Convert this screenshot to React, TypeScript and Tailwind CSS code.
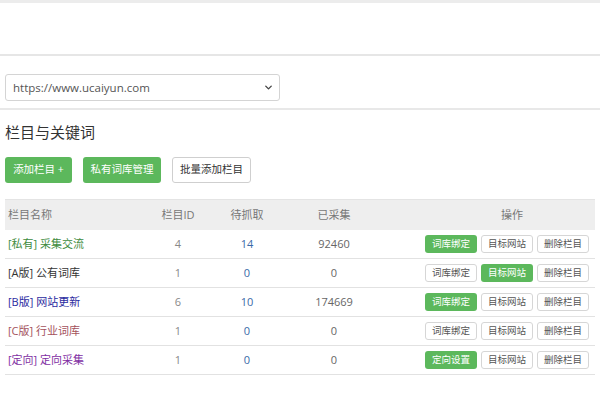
import React from 'react';
import { ChevronDown } from 'lucide-react';

type Row = {
    tag: string;
    name: string;
    color: string;
    id: number;
    pending: number;
    collected: number;
    first: string;
    active: 'first' | 'second' | 'none';
};

const rows: Row[] = [
    { tag: '[私有]', name: '采集交流', color: 'text-[#3d8b3d]', id: 4, pending: 14, collected: 92460, first: '词库绑定', active: 'first' },
    { tag: '[A版]', name: '公有词库', color: 'text-[#333333]', id: 1, pending: 0, collected: 0, first: '词库绑定', active: 'second' },
    { tag: '[B版]', name: '网站更新', color: 'text-[#2b2ba0]', id: 6, pending: 10, collected: 174669, first: '词库绑定', active: 'first' },
    { tag: '[C版]', name: '行业词库', color: 'text-[#a4525c]', id: 1, pending: 0, collected: 0, first: '词库绑定', active: 'none' },
    { tag: '[定向]', name: '定向采集', color: 'text-[#7f2fa3]', id: 1, pending: 0, collected: 0, first: '定向设置', active: 'first' },
];

const font = { fontFamily: '"Open Sans", "Noto Sans CJK SC", sans-serif' };

function ActionButton({ label, green }: { label: string; green: boolean }) {
    return (
        <span
            className={`flex h-[18px] w-[52px] items-center justify-center rounded-[3px] text-[9.5px] leading-none ${
                green ? 'bg-[#5cb85c] text-white' : 'border border-[#d6d6d6] bg-white text-[#555]'
            }`}
        >
            {label}
        </span>
    );
}

export default function App() {
    return (
        <div className="h-[400px] w-[600px] overflow-hidden bg-white" style={font}>
            {/* top bar */}
            <div className="h-[56px] border-t-[3px] border-b-2 border-t-[#ececec] border-b-[#e6e6e6]" />

            {/* site select */}
            <div className="pl-[5px] pt-[18px] pb-[7px] border-b-2 border-[#e8e8e8]">
                <div className="flex h-[27px] w-[275px] items-center justify-between rounded-[3px] border border-[#d4d4d4] pl-[7px] pr-[5px] text-[11.5px] text-[#555]">
                    <span>https://www.ucaiyun.com</span>
                    <ChevronDown className="h-[11px] w-[11px] text-[#444]" strokeWidth={3} />
                </div>
            </div>

            <div className="px-[5px]">
                <h2 className="pt-[12px] text-[15px] leading-[20px] text-[#333]">栏目与关键词</h2>

                {/* toolbar */}
                <div className="mt-[15px] flex gap-[11px] text-[10.5px]">
                    <span className="flex h-[26px] w-[67px] items-center justify-center rounded-[3px] bg-[#5cb85c] text-white">添加栏目 +</span>
                    <span className="flex h-[26px] w-[78px] items-center justify-center rounded-[3px] bg-[#5cb85c] text-white">私有词库管理</span>
                    <span className="flex h-[26px] w-[79px] items-center justify-center rounded-[3px] border border-[#cfcfcf] bg-white text-[#333]">批量添加栏目</span>
                </div>

                {/* table */}
                <div className="mt-[16px] border-t border-[#e4e4e4] text-[11px]">
                    <div className="grid h-[30px] grid-cols-[138px_70px_68px_106px_1fr] items-center bg-[#eeeeee] text-[#777]">
                        <span className="pl-[3px]">栏目名称</span>
                        <span className="text-center">栏目ID</span>
                        <span className="text-center">待抓取</span>
                        <span className="text-center">已采集</span>
                        <span className="pl-[42px] text-center">操作</span>
                    </div>
                    {rows.map((row, i) => (
                        <div
                            key={i}
                            className="grid h-[29px] grid-cols-[138px_70px_68px_106px_1fr] items-center border-b border-[#e2e2e2]"
                        >
                            <span className={`pl-[3px] ${row.color}`}>
                                {row.tag} {row.name}
                            </span>
                            <span className="text-center text-[#888]">{row.id}</span>
                            <span className="text-center text-[#3a6aa8]">{row.pending}</span>
                            <span className="text-center text-[#666]">{row.collected}</span>
                            <div className="flex justify-end gap-[4px] pr-[6px]">
                                <ActionButton label={row.first} green={row.active === 'first'} />
                                <ActionButton label="目标网站" green={row.active === 'second'} />
                                <ActionButton label="删除栏目" green={false} />
                            </div>
                        </div>
                    ))}
                </div>
            </div>
        </div>
    );
}
